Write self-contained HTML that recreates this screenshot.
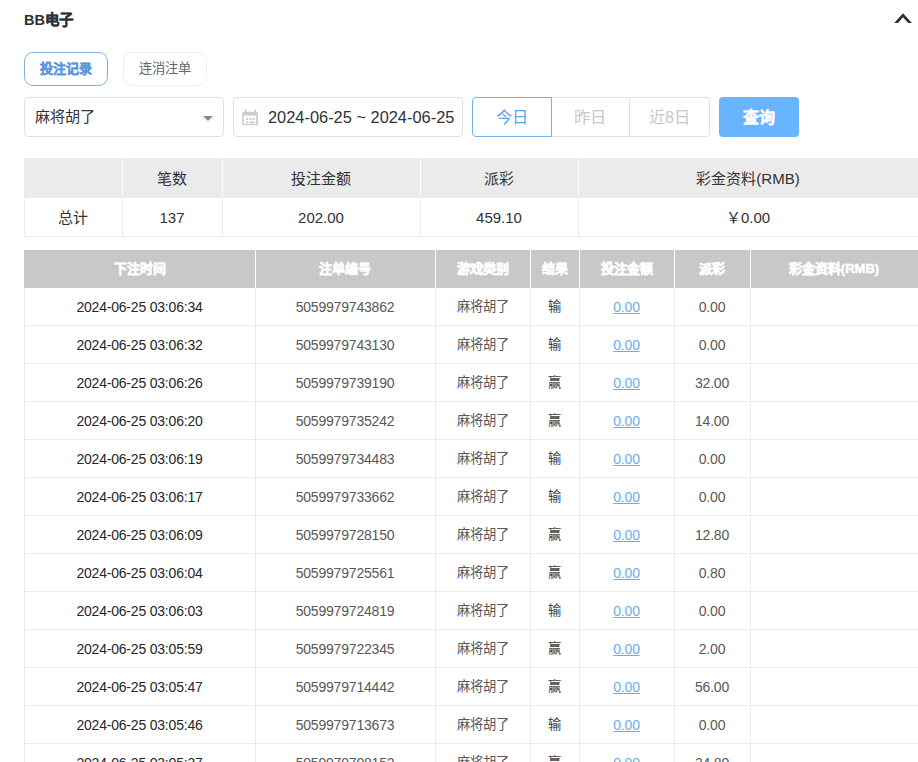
<!DOCTYPE html>
<html lang="zh-CN"><head><meta charset="utf-8">
<style>
*{box-sizing:border-box;margin:0;padding:0}
html,body{width:918px;height:762px;overflow:hidden;background:#fff;font-family:"Liberation Sans",sans-serif;color:#303133}
div,span,svg{position:absolute}
.c{text-align:center;white-space:nowrap}
.title{left:24px;top:11px;font-size:14.5px;font-weight:bold;color:#2b2f36;line-height:18px}
.tab{top:52px;height:34px;border-radius:9px;font-size:13px;line-height:32px;text-align:center}
.tab1{left:24px;width:84px;border:1px solid #7fb3e6;color:#5596dc;font-weight:bold;-webkit-text-stroke:0.3px #5596dc}
.tab2{left:123px;width:84px;border:1px solid #efefef;color:#666;font-size:13.3px}
.sel{left:24px;top:97px;width:200px;height:40px;border:1px solid #e0e0e0;border-radius:4px;font-size:15.2px;line-height:38px;padding-left:10px;color:#333}
.arrow{left:203px;top:116px;width:0;height:0;border-left:5px solid transparent;border-right:5px solid transparent;border-top:5px solid #8a8a8a}
.date{left:233px;top:97px;width:230px;height:40px;border:1px solid #e0e0e0;border-radius:4px}
.dtxt{left:268px;top:108px;font-size:16.4px;line-height:19px;color:#303133;white-space:nowrap}
.seg{top:97px;height:40px;width:80px;border:1px solid #e2e2e2;font-size:16.3px;line-height:38px;text-align:center;color:#c8c8c8}
.qbtn{left:719px;top:97px;width:80px;height:40px;border-radius:4px;background:#68b4ff;color:#fff;font-size:16px;line-height:42px;-webkit-text-stroke:0.3px #fff;text-align:center;font-weight:bold}
.sh{background:#ebebeb}
.st{font-size:15px;color:#303133;line-height:20px}
.dh{background:#c8c8c8}
.ht{font-size:13px;color:#fff;font-weight:bold;line-height:18px;-webkit-text-stroke:0.5px #fff}
.rt{font-size:14px;letter-spacing:-0.2px;color:#585858;line-height:18px}
.rt.z{font-size:13.3px;letter-spacing:0}
.rt.k{color:#262626}
.rt.r{color:#404040}
.lk{color:#66b1e8;text-decoration:underline}
.vl{width:1px;background:#ebebeb}
.hl{height:1px;background:#ebebeb}
</style></head><body>
<div class="title">BB<span style="position:static;-webkit-text-stroke:0.35px #2b2f36">电子</span></div>
<svg style="left:890px;top:8px" width="26" height="20" viewBox="0 0 26 20"><path d="M4.2 15 L13 5.2 L21.9 15 L18.2 15 L13 9.3 L7.9 15 Z" fill="#2b2f36"/></svg>
<div class="tab tab1">投注记录</div>
<div class="tab tab2">连消注单</div>
<div class="sel">麻将胡了</div>
<div class="arrow"></div>
<div class="date"></div>
<svg style="left:242px;top:109px" width="17" height="17" viewBox="0 0 17 17"><rect x="0.2" y="2.8" width="15.8" height="13.4" rx="1" fill="#cdcdcd"/><rect x="1.8" y="6.5" width="12.4" height="8.3" fill="#fff"/><rect x="2.8" y="0.5" width="1.8" height="3" fill="#cdcdcd"/><rect x="12.3" y="0.5" width="1.8" height="3" fill="#cdcdcd"/><rect x="4.2" y="9" width="2" height="2" fill="#cdcdcd"/><rect x="7.4" y="9" width="2" height="2" fill="#cdcdcd"/><rect x="10.5" y="9" width="2" height="2" fill="#cdcdcd"/><rect x="4.2" y="12.3" width="2" height="2" fill="#cdcdcd"/><rect x="7.4" y="12.3" width="5.1" height="2" fill="#cdcdcd"/></svg>
<div class="dtxt">2024-06-25 ~ 2024-06-25</div>
<div class="seg" style="left:551px;border-left:0;width:79px">昨日</div>
<div class="seg" style="left:630px;border-left:0;border-radius:0 4px 4px 0">近8日</div>
<div class="seg" style="left:472px;border-radius:4px 0 0 4px;border-color:#74b3ea;color:#5aa5e6">今日</div>
<div class="qbtn">查询</div>
<div class="sh" style="left:24px;top:158px;width:894px;height:40px"></div>
<div style="left:122px;top:158px;width:1px;height:40px;background:#fff"></div>
<div class="vl" style="left:122px;top:198px;height:39px"></div>
<div style="left:222px;top:158px;width:1px;height:40px;background:#fff"></div>
<div class="vl" style="left:222px;top:198px;height:39px"></div>
<div style="left:420px;top:158px;width:1px;height:40px;background:#fff"></div>
<div class="vl" style="left:420px;top:198px;height:39px"></div>
<div style="left:578px;top:158px;width:1px;height:40px;background:#fff"></div>
<div class="vl" style="left:578px;top:198px;height:39px"></div>
<div class="vl" style="left:24px;top:198px;height:39px"></div>
<div class="hl" style="left:24px;top:236px;width:894px"></div>
<div class="c st" style="left:24px;width:98px;top:169px"></div>
<div class="c st" style="left:24px;width:98px;top:208px">总计</div>
<div class="c st" style="left:122px;width:100px;top:169px">笔数</div>
<div class="c st" style="left:122px;width:100px;top:208px">137</div>
<div class="c st" style="left:222px;width:198px;top:169px">投注金额</div>
<div class="c st" style="left:222px;width:198px;top:208px">202.00</div>
<div class="c st" style="left:420px;width:158px;top:169px">派彩</div>
<div class="c st" style="left:420px;width:158px;top:208px">459.10</div>
<div class="c st" style="left:578px;width:340px;top:169px">彩金资料(RMB)</div>
<div class="c st" style="left:578px;width:340px;top:208px">￥0.00</div>
<div class="dh" style="left:24px;top:250px;width:894px;height:38px"></div>
<div style="left:255px;top:250px;width:1px;height:38px;background:#fff"></div>
<div class="vl" style="left:255px;top:288px;height:474px"></div>
<div style="left:435px;top:250px;width:1px;height:38px;background:#fff"></div>
<div class="vl" style="left:435px;top:288px;height:474px"></div>
<div style="left:530px;top:250px;width:1px;height:38px;background:#fff"></div>
<div class="vl" style="left:530px;top:288px;height:474px"></div>
<div style="left:579px;top:250px;width:1px;height:38px;background:#fff"></div>
<div class="vl" style="left:579px;top:288px;height:474px"></div>
<div style="left:674px;top:250px;width:1px;height:38px;background:#fff"></div>
<div class="vl" style="left:674px;top:288px;height:474px"></div>
<div style="left:750px;top:250px;width:1px;height:38px;background:#fff"></div>
<div class="vl" style="left:750px;top:288px;height:474px"></div>
<div class="vl" style="left:24px;top:288px;height:474px"></div>
<div class="c ht" style="left:24px;width:231px;top:260px">下注时间</div>
<div class="c ht" style="left:255px;width:180px;top:260px">注单编号</div>
<div class="c ht" style="left:435px;width:95px;top:260px">游戏类别</div>
<div class="c ht" style="left:530px;width:49px;top:260px">结果</div>
<div class="c ht" style="left:579px;width:95px;top:260px">投注金额</div>
<div class="c ht" style="left:674px;width:76px;top:260px">派彩</div>
<div class="c ht" style="left:750px;width:168px;top:260px">彩金资料(RMB)</div>
<div class="hl" style="left:24px;top:325px;width:894px"></div>
<div class="c rt k" style="left:24px;width:231px;top:298px">2024-06-25 03:06:34</div>
<div class="c rt" style="left:255px;width:180px;top:298px">5059979743862</div>
<div class="c rt z" style="left:435px;width:95px;top:298px">麻将胡了</div>
<div class="c rt z r" style="left:530px;width:49px;top:298px">输</div>
<div class="c rt" style="left:579px;width:95px;top:298px"><span class="lk" style="position:static">0.00</span></div>
<div class="c rt" style="left:674px;width:76px;top:298px">0.00</div>
<div class="hl" style="left:24px;top:363px;width:894px"></div>
<div class="c rt k" style="left:24px;width:231px;top:336px">2024-06-25 03:06:32</div>
<div class="c rt" style="left:255px;width:180px;top:336px">5059979743130</div>
<div class="c rt z" style="left:435px;width:95px;top:336px">麻将胡了</div>
<div class="c rt z r" style="left:530px;width:49px;top:336px">输</div>
<div class="c rt" style="left:579px;width:95px;top:336px"><span class="lk" style="position:static">0.00</span></div>
<div class="c rt" style="left:674px;width:76px;top:336px">0.00</div>
<div class="hl" style="left:24px;top:401px;width:894px"></div>
<div class="c rt k" style="left:24px;width:231px;top:374px">2024-06-25 03:06:26</div>
<div class="c rt" style="left:255px;width:180px;top:374px">5059979739190</div>
<div class="c rt z" style="left:435px;width:95px;top:374px">麻将胡了</div>
<div class="c rt z r" style="left:530px;width:49px;top:374px">赢</div>
<div class="c rt" style="left:579px;width:95px;top:374px"><span class="lk" style="position:static">0.00</span></div>
<div class="c rt" style="left:674px;width:76px;top:374px">32.00</div>
<div class="hl" style="left:24px;top:439px;width:894px"></div>
<div class="c rt k" style="left:24px;width:231px;top:412px">2024-06-25 03:06:20</div>
<div class="c rt" style="left:255px;width:180px;top:412px">5059979735242</div>
<div class="c rt z" style="left:435px;width:95px;top:412px">麻将胡了</div>
<div class="c rt z r" style="left:530px;width:49px;top:412px">赢</div>
<div class="c rt" style="left:579px;width:95px;top:412px"><span class="lk" style="position:static">0.00</span></div>
<div class="c rt" style="left:674px;width:76px;top:412px">14.00</div>
<div class="hl" style="left:24px;top:477px;width:894px"></div>
<div class="c rt k" style="left:24px;width:231px;top:450px">2024-06-25 03:06:19</div>
<div class="c rt" style="left:255px;width:180px;top:450px">5059979734483</div>
<div class="c rt z" style="left:435px;width:95px;top:450px">麻将胡了</div>
<div class="c rt z r" style="left:530px;width:49px;top:450px">输</div>
<div class="c rt" style="left:579px;width:95px;top:450px"><span class="lk" style="position:static">0.00</span></div>
<div class="c rt" style="left:674px;width:76px;top:450px">0.00</div>
<div class="hl" style="left:24px;top:515px;width:894px"></div>
<div class="c rt k" style="left:24px;width:231px;top:488px">2024-06-25 03:06:17</div>
<div class="c rt" style="left:255px;width:180px;top:488px">5059979733662</div>
<div class="c rt z" style="left:435px;width:95px;top:488px">麻将胡了</div>
<div class="c rt z r" style="left:530px;width:49px;top:488px">输</div>
<div class="c rt" style="left:579px;width:95px;top:488px"><span class="lk" style="position:static">0.00</span></div>
<div class="c rt" style="left:674px;width:76px;top:488px">0.00</div>
<div class="hl" style="left:24px;top:553px;width:894px"></div>
<div class="c rt k" style="left:24px;width:231px;top:526px">2024-06-25 03:06:09</div>
<div class="c rt" style="left:255px;width:180px;top:526px">5059979728150</div>
<div class="c rt z" style="left:435px;width:95px;top:526px">麻将胡了</div>
<div class="c rt z r" style="left:530px;width:49px;top:526px">赢</div>
<div class="c rt" style="left:579px;width:95px;top:526px"><span class="lk" style="position:static">0.00</span></div>
<div class="c rt" style="left:674px;width:76px;top:526px">12.80</div>
<div class="hl" style="left:24px;top:591px;width:894px"></div>
<div class="c rt k" style="left:24px;width:231px;top:564px">2024-06-25 03:06:04</div>
<div class="c rt" style="left:255px;width:180px;top:564px">5059979725561</div>
<div class="c rt z" style="left:435px;width:95px;top:564px">麻将胡了</div>
<div class="c rt z r" style="left:530px;width:49px;top:564px">赢</div>
<div class="c rt" style="left:579px;width:95px;top:564px"><span class="lk" style="position:static">0.00</span></div>
<div class="c rt" style="left:674px;width:76px;top:564px">0.80</div>
<div class="hl" style="left:24px;top:629px;width:894px"></div>
<div class="c rt k" style="left:24px;width:231px;top:602px">2024-06-25 03:06:03</div>
<div class="c rt" style="left:255px;width:180px;top:602px">5059979724819</div>
<div class="c rt z" style="left:435px;width:95px;top:602px">麻将胡了</div>
<div class="c rt z r" style="left:530px;width:49px;top:602px">输</div>
<div class="c rt" style="left:579px;width:95px;top:602px"><span class="lk" style="position:static">0.00</span></div>
<div class="c rt" style="left:674px;width:76px;top:602px">0.00</div>
<div class="hl" style="left:24px;top:667px;width:894px"></div>
<div class="c rt k" style="left:24px;width:231px;top:640px">2024-06-25 03:05:59</div>
<div class="c rt" style="left:255px;width:180px;top:640px">5059979722345</div>
<div class="c rt z" style="left:435px;width:95px;top:640px">麻将胡了</div>
<div class="c rt z r" style="left:530px;width:49px;top:640px">赢</div>
<div class="c rt" style="left:579px;width:95px;top:640px"><span class="lk" style="position:static">0.00</span></div>
<div class="c rt" style="left:674px;width:76px;top:640px">2.00</div>
<div class="hl" style="left:24px;top:705px;width:894px"></div>
<div class="c rt k" style="left:24px;width:231px;top:678px">2024-06-25 03:05:47</div>
<div class="c rt" style="left:255px;width:180px;top:678px">5059979714442</div>
<div class="c rt z" style="left:435px;width:95px;top:678px">麻将胡了</div>
<div class="c rt z r" style="left:530px;width:49px;top:678px">赢</div>
<div class="c rt" style="left:579px;width:95px;top:678px"><span class="lk" style="position:static">0.00</span></div>
<div class="c rt" style="left:674px;width:76px;top:678px">56.00</div>
<div class="hl" style="left:24px;top:743px;width:894px"></div>
<div class="c rt k" style="left:24px;width:231px;top:716px">2024-06-25 03:05:46</div>
<div class="c rt" style="left:255px;width:180px;top:716px">5059979713673</div>
<div class="c rt z" style="left:435px;width:95px;top:716px">麻将胡了</div>
<div class="c rt z r" style="left:530px;width:49px;top:716px">输</div>
<div class="c rt" style="left:579px;width:95px;top:716px"><span class="lk" style="position:static">0.00</span></div>
<div class="c rt" style="left:674px;width:76px;top:716px">0.00</div>
<div class="hl" style="left:24px;top:781px;width:894px"></div>
<div class="c rt k" style="left:24px;width:231px;top:754px">2024-06-25 03:05:37</div>
<div class="c rt" style="left:255px;width:180px;top:754px">5059979708152</div>
<div class="c rt z" style="left:435px;width:95px;top:754px">麻将胡了</div>
<div class="c rt z r" style="left:530px;width:49px;top:754px">赢</div>
<div class="c rt" style="left:579px;width:95px;top:754px"><span class="lk" style="position:static">0.00</span></div>
<div class="c rt" style="left:674px;width:76px;top:754px">34.80</div>
</body></html>
